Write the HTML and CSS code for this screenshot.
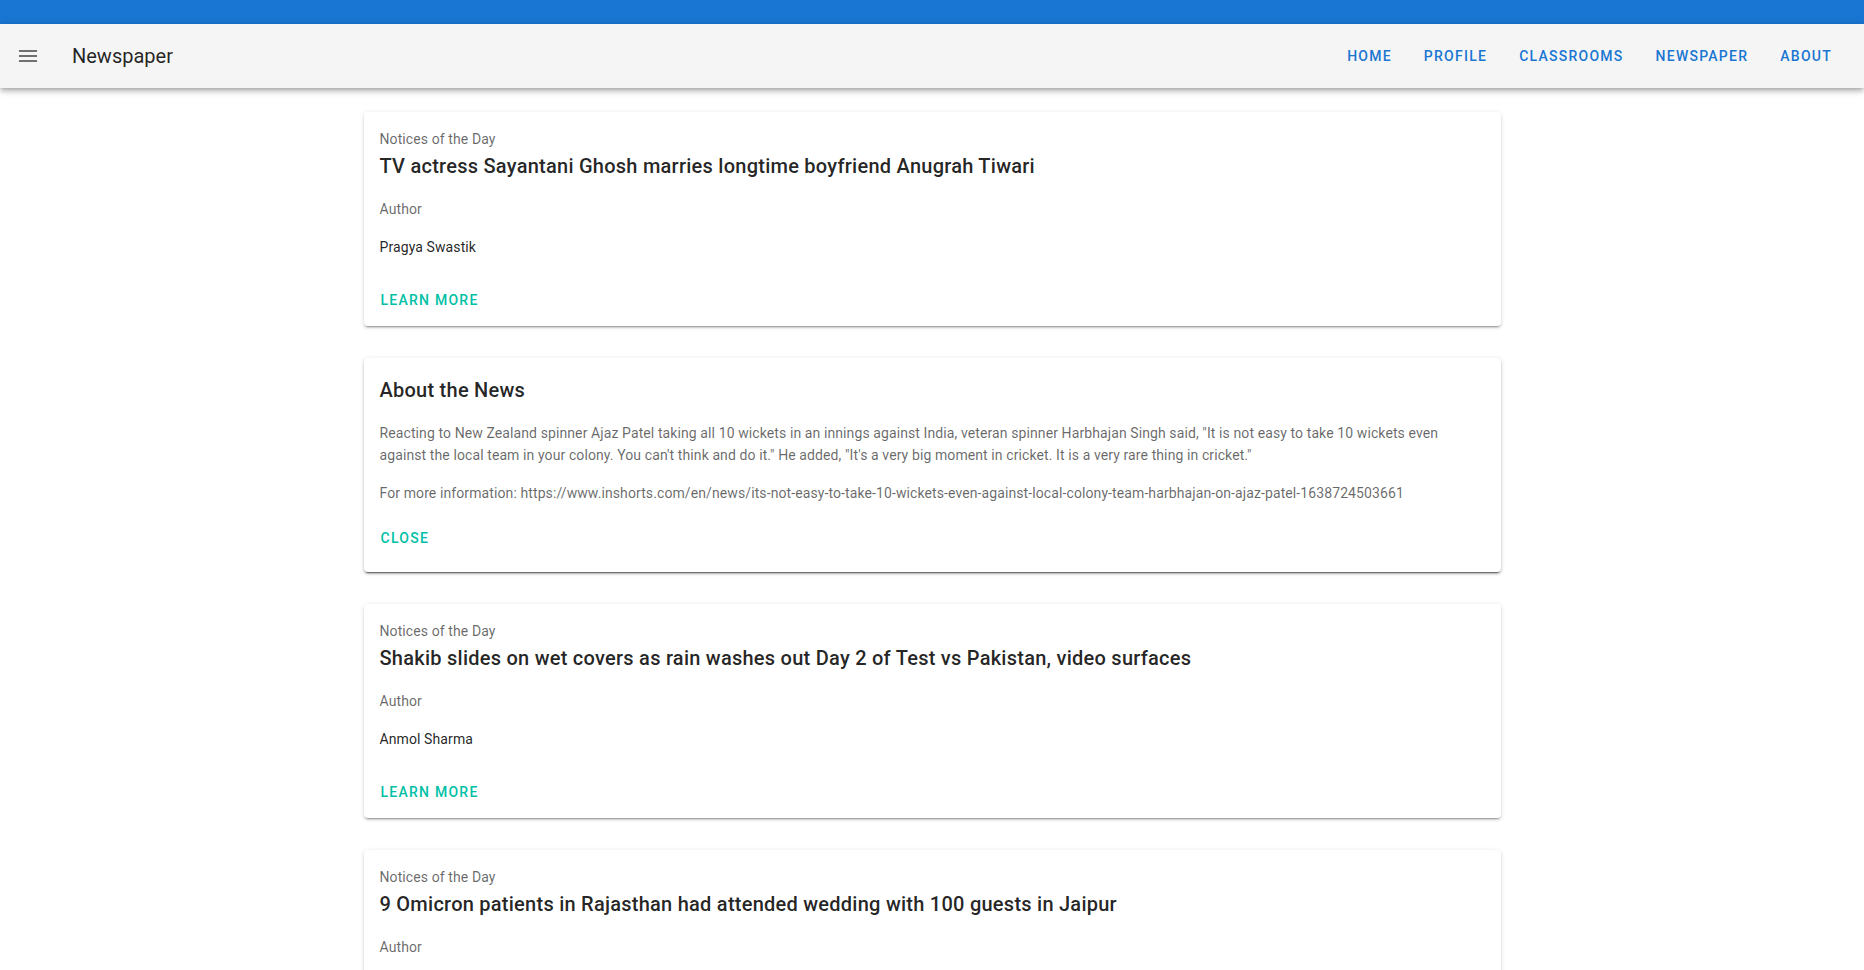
FILE: index.html
```html
<!DOCTYPE html>
<html lang="en">
<head>
<meta charset="utf-8">
<title>Newspaper</title>
<link rel="stylesheet" href="styles.css">
</head>
<body>
<div class="system-bar"></div>
<header class="app-bar">
  <button class="nav-icon" aria-label="menu">
    <svg viewBox="0 0 24 24" width="24" height="24"><path d="M3,6H21V8H3V6M3,11H21V13H3V11M3,16H21V18H3V16Z"/></svg>
  </button>
  <div class="app-title">Newspaper</div>
  <div class="spacer"></div>
  <nav class="nav-items">
    <a class="nav-btn">Home</a>
    <a class="nav-btn">Profile</a>
    <a class="nav-btn">Classrooms</a>
    <a class="nav-btn">Newspaper</a>
    <a class="nav-btn">About</a>
  </nav>
</header>
<main class="container">
  <div class="col">
    <article class="card">
      <div class="card-text">
        <div>Notices of the Day</div>
        <p class="title">TV actress Sayantani Ghosh marries longtime boyfriend Anugrah Tiwari</p>
        <p>Author</p>
        <div class="primary">Pragya Swastik</div>
      </div>
      <div class="card-actions">
        <button class="text-btn">Learn More</button>
      </div>
    </article>

    <article class="card card-reveal">
      <div class="card-text pb-0">
        <p class="title">About the News</p>
        <p>Reacting to New Zealand spinner Ajaz Patel taking all 10 wickets in an innings against India, veteran spinner Harbhajan Singh said, "It is not easy to take 10 wickets even against the local team in your colony. You can't think and do it." He added, "It's a very big moment in cricket. It is a very rare thing in cricket."</p>
        <p>For more information: https://www.inshorts.com/en/news/its-not-easy-to-take-10-wickets-even-against-local-colony-team-harbhajan-on-ajaz-patel-1638724503661</p>
      </div>
      <div class="card-actions pt-0">
        <button class="text-btn">Close</button>
      </div>
    </article>

    <article class="card">
      <div class="card-text">
        <div>Notices of the Day</div>
        <p class="title">Shakib slides on wet covers as rain washes out Day 2 of Test vs Pakistan, video surfaces</p>
        <p>Author</p>
        <div class="primary">Anmol Sharma</div>
      </div>
      <div class="card-actions">
        <button class="text-btn">Learn More</button>
      </div>
    </article>

    <article class="card">
      <div class="card-text">
        <div>Notices of the Day</div>
        <p class="title">9 Omicron patients in Rajasthan had attended wedding with 100 guests in Jaipur</p>
        <p>Author</p>
      </div>
      <div class="card-actions">
        <button class="text-btn">Learn More</button>
      </div>
    </article>
  </div>
</main>
</body>
</html>
```
FILE: styles.css
```css
* { box-sizing: border-box; }
html, body { margin: 0; padding: 0; overflow: hidden; }
body {
  font-family: Roboto, "Noto Sans", sans-serif;
  background: #ffffff;
  color: rgba(0,0,0,.87);
  -webkit-font-smoothing: antialiased;
}
.system-bar {
  height: 24px;
  background: #1976d2;
}
.app-bar {
  position: relative;
  z-index: 2;
  height: 64px;
  display: flex;
  align-items: center;
  padding: 4px 16px;
  background: #f5f5f5;
  box-shadow: 0 2px 4px -1px rgba(0,0,0,.2), 0 4px 5px 0 rgba(0,0,0,.14), 0 1px 10px 0 rgba(0,0,0,.12);
}
.nav-icon {
  width: 48px;
  height: 48px;
  margin-left: -12px;
  border: 0;
  background: transparent;
  padding: 0;
  display: flex;
  align-items: center;
  justify-content: center;
  border-radius: 50%;
}
.nav-icon svg { fill: rgba(0,0,0,.54); display: block; }
.app-title {
  padding-left: 20px;
  font-size: 20px;
  font-weight: 400;
  letter-spacing: 0;
  color: rgba(0,0,0,.87);
  line-height: 1.5;
}
.spacer { flex: 1 1 auto; }
.nav-items { display: flex; height: 100%; align-items: center; }
.nav-btn {
  display: flex;
  align-items: center;
  height: 36px;
  padding: 0 16px;
  font-size: 14px;
  font-weight: 500;
  letter-spacing: .0892857143em;
  text-transform: uppercase;
  color: #1976d2;
  cursor: pointer;
}
.container {
  max-width: 1185px;
  margin: 0 auto;
  padding: 12px;
}
.col {
  padding: 12px;
  display: flex;
  flex-direction: column;
  gap: 32px;
}
.card {
  background: #fff;
  border-radius: 4px;
  box-shadow: 0 3px 1px -2px rgba(0,0,0,.2), 0 2px 2px 0 rgba(0,0,0,.14), 0 1px 5px 0 rgba(0,0,0,.12);
}
.card-reveal {
  box-shadow: 0 3px 1px -2px rgba(0,0,0,.45), 0 2px 2px 0 rgba(0,0,0,.22), 0 1px 5px 0 rgba(0,0,0,.14);
}
.card-text {
  padding: 16px;
  font-size: 14px;
  line-height: 22px;
  letter-spacing: .0071428571em;
  color: rgba(0,0,0,.6);
}
.card-text.pb-0 { padding-bottom: 0; }
.card-text p { margin: 0 0 16px; }
.card-text .title {
  font-size: 20px;
  font-weight: 500;
  line-height: 32px;
  letter-spacing: .0125em;
  color: rgba(0,0,0,.87);
}
.card-text .primary { color: rgba(0,0,0,.87); }
.card-actions {
  display: flex;
  align-items: center;
  padding: 8px;
}
.card-actions.pt-0 { padding: 0 8px 16px; }
.text-btn {
  height: 36px;
  padding: 0 8px 0 9px;
  border: 0;
  background: transparent;
  font-family: Roboto, "Noto Sans", sans-serif;
  font-size: 14px;
  font-weight: 500;
  letter-spacing: .0892857143em;
  text-transform: uppercase;
  color: #00bfa5;
  border-radius: 4px;
  cursor: pointer;
}
```
